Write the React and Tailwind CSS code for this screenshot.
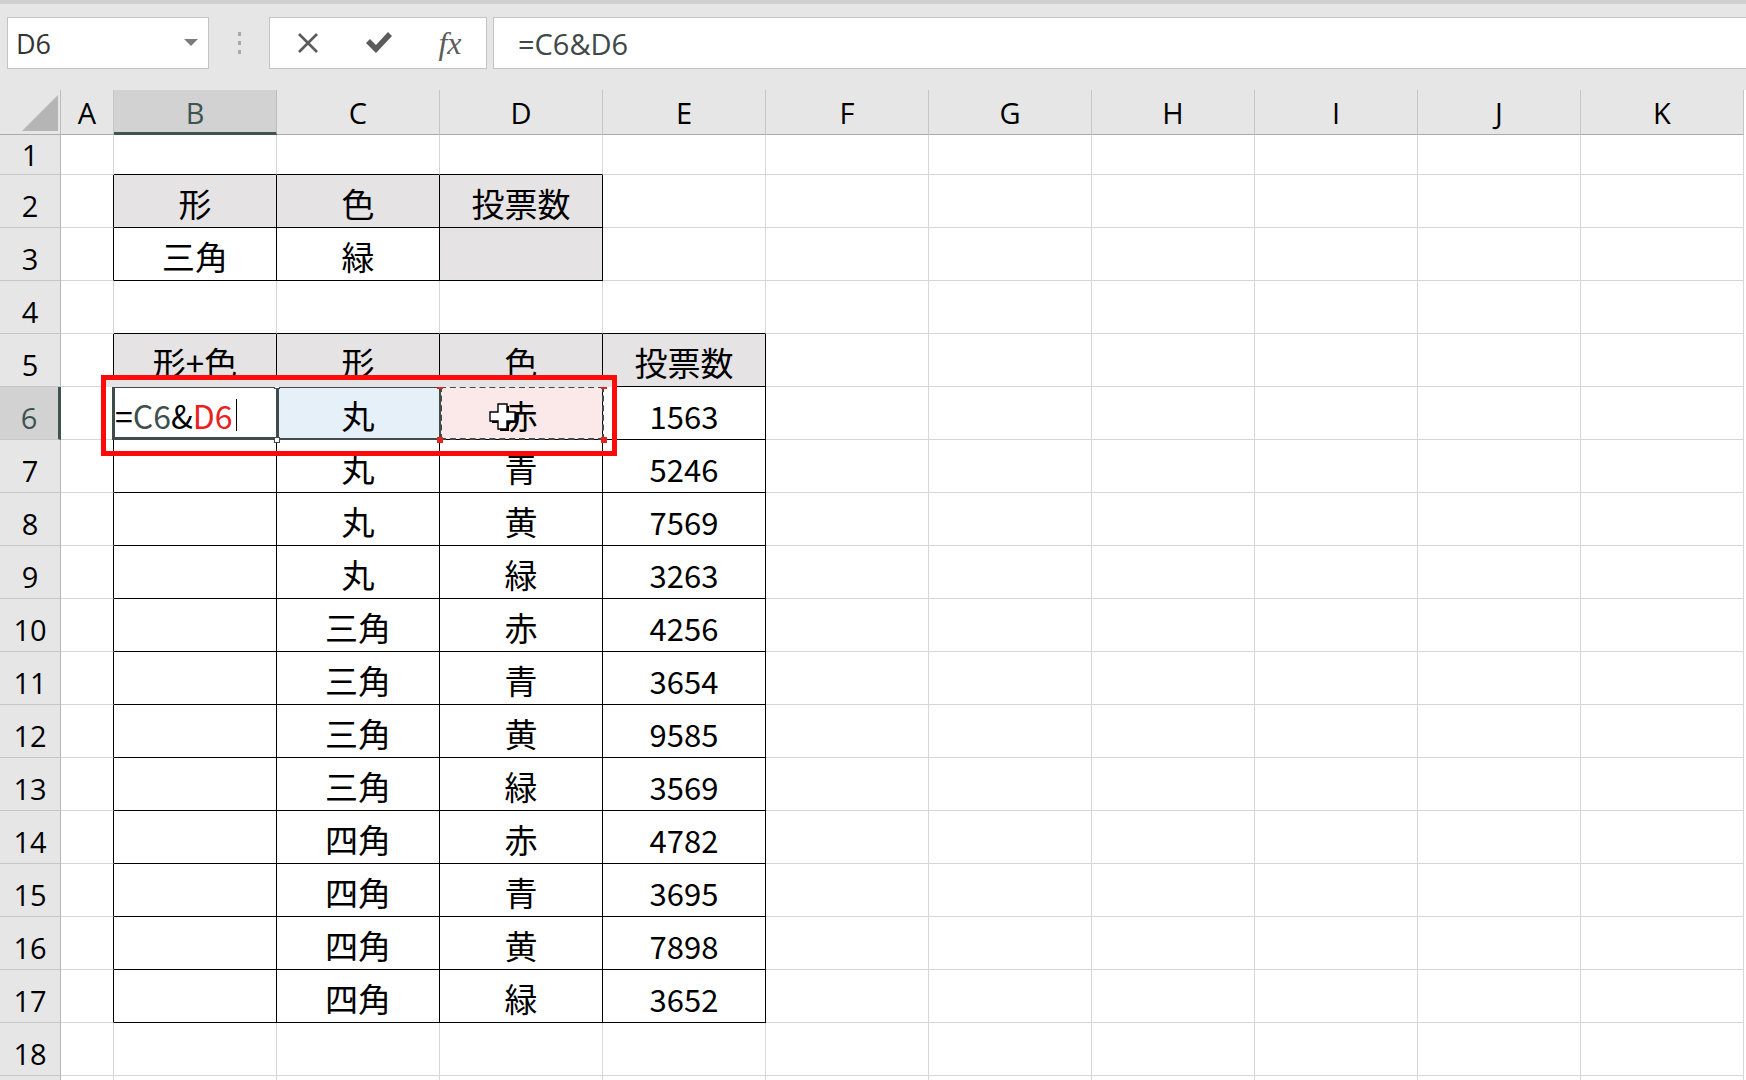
const COLS = ['A', 'B', 'C', 'D', 'E', 'F', 'G', 'H', 'I', 'J', 'K'];

const LIST = [
  ['丸', '赤', '1563'],
  ['丸', '青', '5246'],
  ['丸', '黄', '7569'],
  ['丸', '緑', '3263'],
  ['三角', '赤', '4256'],
  ['三角', '青', '3654'],
  ['三角', '黄', '9585'],
  ['三角', '緑', '3569'],
  ['四角', '赤', '4782'],
  ['四角', '青', '3695'],
  ['四角', '黄', '7898'],
  ['四角', '緑', '3652'],
];

// column index: A=0, B=1 ...
function inTable(r, c) {
  if (r >= 2 && r <= 3 && c >= 1 && c <= 3) return true;
  if (r >= 5 && r <= 17 && c >= 1 && c <= 4) return true;
  return false;
}

function cellText(r, c) {
  if (r === 2) return ['', '形', '色', '投票数'][c] || '';
  if (r === 3) return ['', '三角', '緑'][c] || '';
  if (r === 5) return ['', '形+色', '形', '色', '投票数'][c] || '';
  if (r >= 6 && r <= 17 && c >= 2 && c <= 4) return LIST[r - 6][c - 2];
  return '';
}

function cellBg(r, c) {
  if (r === 2 && c >= 1 && c <= 3) return 'bg-[#e5e3e3]';
  if (r === 3 && c === 3) return 'bg-[#e5e3e3]';
  if (r === 5 && c >= 1 && c <= 4) return 'bg-[#e5e3e3]';
  if (r === 6 && c === 2) return 'bg-[#e6f0f9]';
  if (r === 6 && c === 3) return 'bg-[#fbe8e8]';
  return 'bg-white';
}

function Cell({ r, c }) {
  const right = inTable(r, c) || inTable(r, c + 1) ? 'border-r-black' : 'border-r-[#d6d6d6]';
  const bottom = inTable(r, c) || inTable(r + 1, c) ? 'border-b-black' : 'border-b-[#d6d6d6]';
  if (r === 6 && c === 1) {
    return (
      <div className={`flex items-center border-r border-b pt-[4px] pl-[1px] text-[32px] leading-none ${right} ${bottom} bg-white`}>
        <span className="text-black">=</span>
        <span className="text-[#3f4f4d]">C6</span>
        <span className="text-black">&amp;</span>
        <span className="text-[#e8231f]">D6</span>
        <span className="ml-[3px] h-[32px] w-[1px] bg-black"></span>
      </div>
    );
  }
  const text = cellText(r, c);
  const numeric = /^\d+$/.test(text);
  return (
    <div
      className={`flex items-center justify-center border-r border-b pt-[5px] leading-none text-black ${
        numeric ? 'text-[31px]' : 'text-[33px]'
      } ${right} ${bottom} ${cellBg(r, c)}`}
    >
      {text}
    </div>
  );
}

function Toolbar() {
  return (
    <div className="h-[90px] border-t-4 border-[#cfcfcf] bg-[#e6e6e6] pt-[13px] font-['Open_Sans',sans-serif]">
      <div className="flex h-[52px] items-stretch">
        <div className="ml-[7px] flex w-[202px] items-center justify-between border border-[#c3c3c3] bg-white pl-[8px] pr-[10px]">
          <span className="text-[27px] leading-none text-[#333]">D6</span>
          <svg width="14" height="8" viewBox="0 0 14 8">
            <path d="M0 0 L14 0 L7 7 Z" fill="#7c7c7c" />
          </svg>
        </div>
        <div className="flex w-[60px] flex-col items-center justify-center gap-[5px]">
          <span className="h-[4px] w-[3px] bg-[#a9a9a9]"></span>
          <span className="h-[4px] w-[3px] bg-[#a9a9a9]"></span>
          <span className="h-[4px] w-[3px] bg-[#a9a9a9]"></span>
        </div>
        <div className="flex w-[218px] items-center gap-[31px] border border-[#c3c3c3] bg-white pl-[18px]">
          <div className="flex w-[40px] justify-center">
            <svg width="24" height="24" viewBox="0 0 24 24">
              <path d="M3 3 L21 21 M21 3 L3 21" stroke="#5b5b5b" strokeWidth="2.6" />
            </svg>
          </div>
          <div className="flex w-[40px] justify-center">
            <svg width="28" height="24" viewBox="0 0 28 24">
              <path d="M1 12 L5 8 L11 14 L23 1 L27 5 L11 22 Z" fill="#5b5b5b" />
            </svg>
          </div>
          <div className="flex w-[40px] justify-center">
            <span className="font-['Liberation_Serif',serif] text-[32px] italic leading-none text-[#5b5b5b]">fx</span>
          </div>
        </div>
        <div className="ml-[6px] flex flex-1 items-center border-y border-l border-[#c3c3c3] bg-white pl-[24px]">
          <span className="text-[29px] leading-none text-[#404848]">=C6&amp;D6</span>
        </div>
      </div>
    </div>
  );
}

function Sheet() {
  const rows = [];
  for (let r = 1; r <= 18; r++) rows.push(r);
  return (
    <div className="relative grid grid-cols-[61px_53px_repeat(10,163px)] grid-rows-[45px_40px_repeat(17,53px)_20px] font-['Noto_Sans_CJK_JP',sans-serif]">
      {/* corner */}
      <div className="relative border-r border-b border-r-[#bdbdbd] border-b-[#ababab] bg-[#e6e6e6]">
        <svg className="absolute left-[22px] top-[5px]" width="36" height="36" viewBox="0 0 36 36">
          <path d="M36 0 L36 36 L0 36 Z" fill="#b5b5b5" />
        </svg>
      </div>
      {COLS.map((col, i) =>
        i === 1 ? (
          <div
            key={col}
            className="flex items-center justify-center border-r border-b-[3px] border-r-[#bdbdbd] border-b-[#3f5450] bg-[#d2d2d2] pt-[3px] font-['Open_Sans',sans-serif] text-[29px] leading-none text-[#3f5450]"
          >
            {col}
          </div>
        ) : (
          <div
            key={col}
            className="flex items-center justify-center border-r border-b border-r-[#c6c6c6] border-b-[#ababab] bg-[#e6e6e6] pt-[1px] font-['Open_Sans',sans-serif] text-[29px] leading-none text-black"
          >
            {col}
          </div>
        )
      )}
      {rows.map((r) => [
        r === 6 ? (
          <div
            key={`h${r}`}
            className="flex items-center justify-center border-r-[3px] border-b border-r-[#3f5450] border-b-[#c6c6c6] bg-[#d2d2d2] pt-[8px] font-['Open_Sans',sans-serif] text-[29px] leading-none text-[#3f5450]"
          >
            {r}
          </div>
        ) : (
          <div
            key={`h${r}`}
            className={`flex items-center justify-center border-r border-b border-r-[#b5b5b5] border-b-[#c6c6c6] bg-[#e6e6e6] font-['Open_Sans',sans-serif] text-[29px] leading-none text-black ${
              r === 1 ? 'pt-0' : 'pt-[8px]'
            }`}
          >
            {r}
          </div>
        ),
        ...COLS.map((col, c) => <Cell key={`${r}${col}`} r={r} c={c} />),
      ])}
      {/* partial row below 18 */}
      <div className="border-r border-r-[#b5b5b5] bg-[#e6e6e6]"></div>
      {COLS.map((col) => (
        <div key={`x${col}`} className="border-r border-r-[#d6d6d6] bg-white"></div>
      ))}

      {/* active cell B6 */}
      <div className="absolute left-[112px] top-[295px] h-[55px] w-[167px] border-[3px] border-[#3f4c4a]"></div>
      {/* C6 reference */}
      <div className="absolute left-[277px] top-[296px] h-[54px] w-[164px] border-2 border-[#3f4c4a]"></div>
      {/* D6 reference (dashed) */}
      <div className="absolute left-[440px] top-[296px] h-[54px] w-[164px] border-2 border-dashed border-[#3f4c4a]"></div>
      <span className="absolute left-[437px] top-[293px] h-[6px] w-[6px] bg-[#e8231f]"></span>
      <span className="absolute left-[601px] top-[293px] h-[6px] w-[6px] bg-[#e8231f]"></span>
      <span className="absolute left-[437px] top-[347px] h-[6px] w-[6px] bg-[#e8231f]"></span>
      <span className="absolute left-[601px] top-[347px] h-[6px] w-[6px] bg-[#e8231f]"></span>
      <span className="absolute left-[274px] top-[293px] h-[6px] w-[6px] border border-[#3f4c4a] bg-white"></span>
      <span className="absolute left-[274px] top-[347px] h-[6px] w-[6px] border border-[#3f4c4a] bg-white"></span>

      {/* annotation box */}
      <div className="absolute left-[106px] top-[290px] h-[7px] w-[506px] bg-[#e5e3e3]"></div>
      <div className="absolute left-[101px] top-[285px] h-[81px] w-[516px] border-[5px] border-[#ff0a0a]"></div>

      {/* mouse cursor */}
      <svg className="absolute left-[489px] top-[313px]" width="32" height="32" viewBox="0 0 32 32">
        <path d="M11 3 h9 v8 h8 v9 h-8 v8 h-9 v-8 h-8 v-9 h8 z" fill="#000" />
        <path d="M9 1 h9 v8 h8 v9 h-8 v8 h-9 v-8 h-8 v-9 h8 z" fill="#fff" stroke="#000" strokeWidth="1.4" />
      </svg>
    </div>
  );
}

export default function App() {
  return (
    <div className="h-[1080px] w-[1746px] overflow-hidden bg-white">
      <Toolbar />
      <Sheet />
    </div>
  );
}
